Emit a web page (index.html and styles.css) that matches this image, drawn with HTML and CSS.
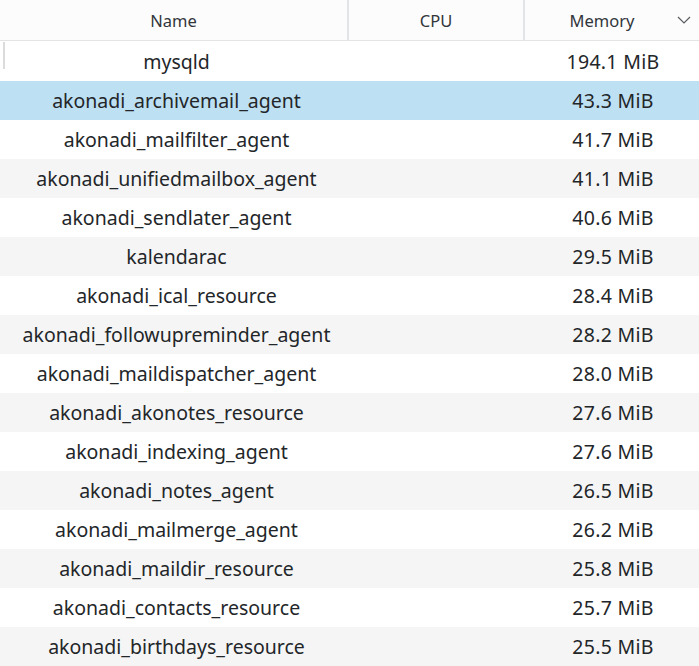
FILE: index.html
```html
<!DOCTYPE html>
<html>
<head>
<meta charset="utf-8">
<link rel="stylesheet" href="styles.css">
</head>
<body>
<div class="table">
  <div class="header">
    <div class="hcell col-name">Name</div>
    <div class="sep"></div>
    <div class="hcell col-cpu">CPU</div>
    <div class="sep"></div>
    <div class="hcell col-mem">Memory
      <svg class="chev" width="14" height="8" viewBox="0 0 14 8"><path d="M1 1 L7 7 L13 1" fill="none" stroke="#5a5d60" stroke-width="1.2"/></svg>
    </div>
  </div>
  <div class="body">
    <div class="row first"><div class="cell col-name">mysqld</div><div class="cell col-cpu"></div><div class="cell col-mem">194.1 MiB</div><div class="grip"></div></div>
    <div class="row sel"><div class="cell col-name">akonadi_archivemail_agent</div><div class="cell col-cpu"></div><div class="cell col-mem">43.3 MiB</div></div>
    <div class="row"><div class="cell col-name">akonadi_mailfilter_agent</div><div class="cell col-cpu"></div><div class="cell col-mem">41.7 MiB</div></div>
    <div class="row alt"><div class="cell col-name">akonadi_unifiedmailbox_agent</div><div class="cell col-cpu"></div><div class="cell col-mem">41.1 MiB</div></div>
    <div class="row"><div class="cell col-name">akonadi_sendlater_agent</div><div class="cell col-cpu"></div><div class="cell col-mem">40.6 MiB</div></div>
    <div class="row alt"><div class="cell col-name">kalendarac</div><div class="cell col-cpu"></div><div class="cell col-mem">29.5 MiB</div></div>
    <div class="row"><div class="cell col-name">akonadi_ical_resource</div><div class="cell col-cpu"></div><div class="cell col-mem">28.4 MiB</div></div>
    <div class="row alt"><div class="cell col-name">akonadi_followupreminder_agent</div><div class="cell col-cpu"></div><div class="cell col-mem">28.2 MiB</div></div>
    <div class="row"><div class="cell col-name">akonadi_maildispatcher_agent</div><div class="cell col-cpu"></div><div class="cell col-mem">28.0 MiB</div></div>
    <div class="row alt"><div class="cell col-name">akonadi_akonotes_resource</div><div class="cell col-cpu"></div><div class="cell col-mem">27.6 MiB</div></div>
    <div class="row"><div class="cell col-name">akonadi_indexing_agent</div><div class="cell col-cpu"></div><div class="cell col-mem">27.6 MiB</div></div>
    <div class="row alt"><div class="cell col-name">akonadi_notes_agent</div><div class="cell col-cpu"></div><div class="cell col-mem">26.5 MiB</div></div>
    <div class="row"><div class="cell col-name">akonadi_mailmerge_agent</div><div class="cell col-cpu"></div><div class="cell col-mem">26.2 MiB</div></div>
    <div class="row alt"><div class="cell col-name">akonadi_maildir_resource</div><div class="cell col-cpu"></div><div class="cell col-mem">25.8 MiB</div></div>
    <div class="row"><div class="cell col-name">akonadi_contacts_resource</div><div class="cell col-cpu"></div><div class="cell col-mem">25.7 MiB</div></div>
    <div class="row alt"><div class="cell col-name">akonadi_birthdays_resource</div><div class="cell col-cpu"></div><div class="cell col-mem">25.5 MiB</div></div>
  </div>
</div>
</body>
</html>
```
FILE: styles.css
```css
html, body {
  margin: 0;
  padding: 0;
  background: #ffffff;
}
body {
  font-family: "Noto Sans", sans-serif;
  color: #232629;
  width: 699px;
  height: 666px;
  overflow: hidden;
}
.table {
  display: flex;
  flex-direction: column;
}
.header {
  display: flex;
  height: 40px;
  background: #fcfcfc;
  border-bottom: 1px solid #e3e4e5;
  font-size: 16.5px;
  color: #31363b;
}
.hcell {
  display: flex;
  align-items: center;
  justify-content: center;
  position: relative;
}
.sep {
  width: 2px;
  background: #e3e4e5;
}
.header .col-name { width: 347px; }
.header .col-cpu { width: 174px; }
.header .col-mem { flex: 1; padding-right: 20px; }
.chev {
  position: absolute;
  right: 8px;
  top: 16px;
}
.body {
  padding-top: 1px;
  font-size: 19.5px;
}
.row {
  display: flex;
  height: 39px;
  align-items: center;
  position: relative;
}
.row.alt { background: #f5f5f5; }
.row.sel { background: #bee0f3; }
.cell {
  text-align: center;
  white-space: nowrap;
}
.row .col-name { width: 343px; padding-left: 5px; }
.row .col-cpu { width: 175px; }
.row .col-mem { flex: 1; padding-left: 4px; letter-spacing: 0.3px; }
.grip {
  position: absolute;
  left: 3px;
  top: 0;
  width: 2px;
  height: 27px;
  background: #dcdcdc;
}
```
